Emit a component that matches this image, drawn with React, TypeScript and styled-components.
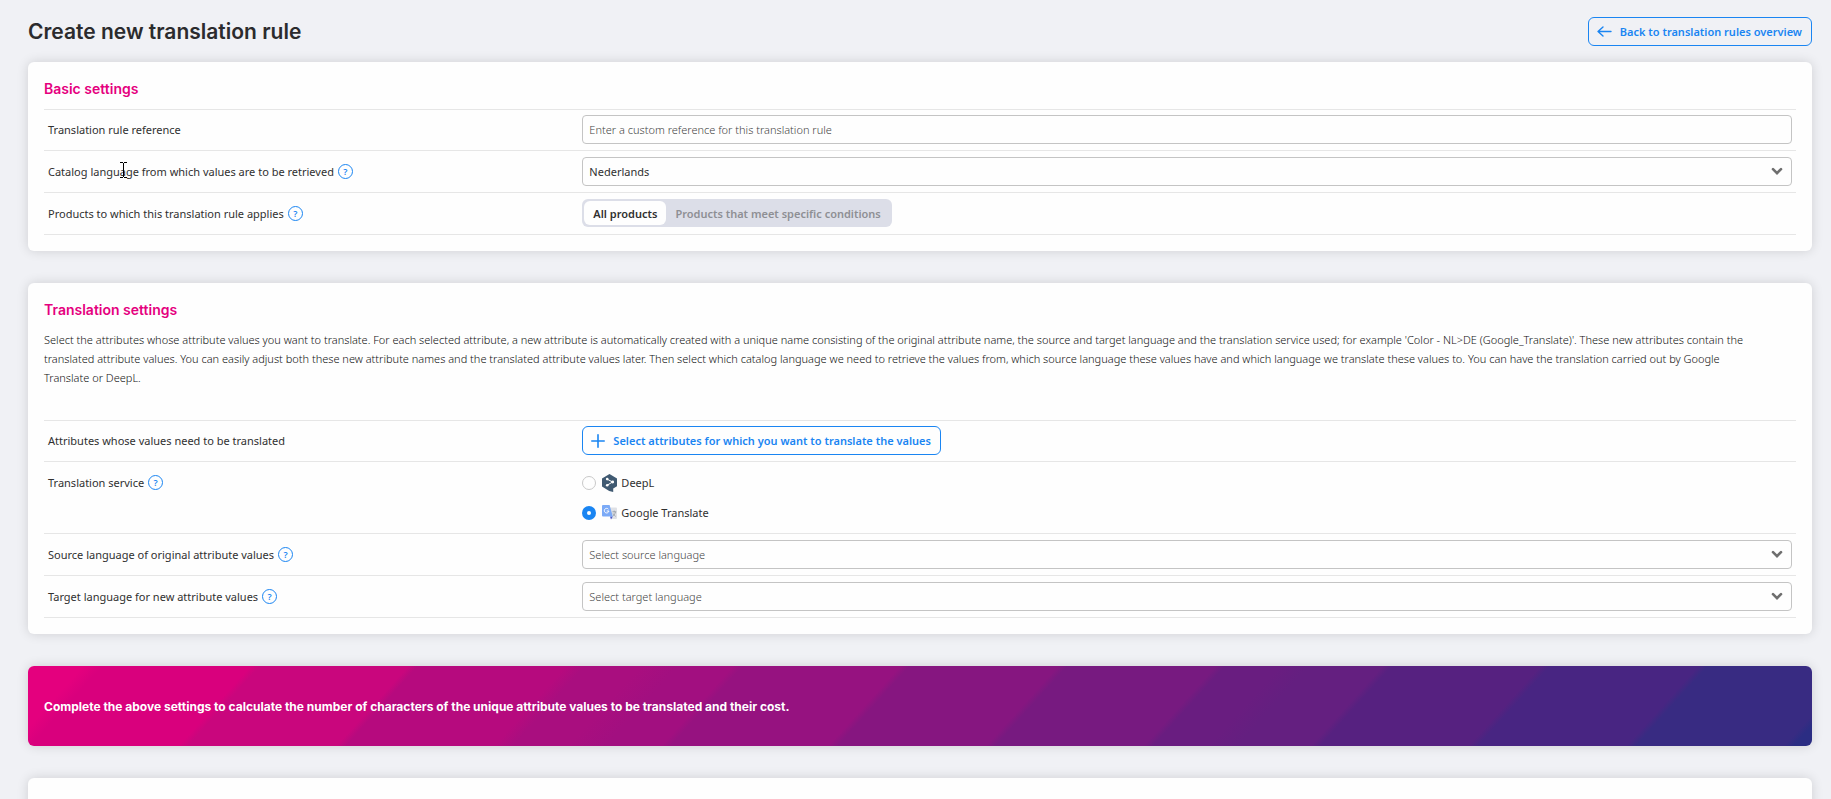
import React, { useState } from 'react';
import styled, { createGlobalStyle } from 'styled-components';

const blue = '#1a85f2';
const pink = '#e5007e';

const GlobalStyle = createGlobalStyle`
  *, *::before, *::after { box-sizing: border-box; }
  body {
    margin: 0;
    background: #f0f1f5;
    color: #303030;
    font-family: "Noto Sans", "Open Sans", sans-serif;
    font-size: 11px;
  }
  button, input, select { font: inherit; color: inherit; margin: 0; }
`;

const Page = styled.main`
  display: flex;
  flex-direction: column;
  gap: 32px;
  height: 100vh;
  overflow: hidden;
  padding: 17px 19px 0 28px;
`;

const Header = styled.header`
  display: flex;
  align-items: center;
  justify-content: space-between;
  flex: none;
  margin-bottom: -16px;
`;

const Title = styled.h1`
  margin: 0;
  font-family: Inter, sans-serif;
  font-size: 21px;
  font-weight: 600;
  line-height: 29px;
  color: #2b2b2d;
`;

const OutlineButton = styled.button`
  display: inline-flex;
  align-items: center;
  gap: 8px;
  height: 29px;
  padding: 0 9px 0 8px;
  border: 1px solid ${blue};
  border-radius: 6px;
  background: transparent;
  color: ${blue};
  font-weight: 600;
  text-decoration: none;
  white-space: nowrap;
  cursor: pointer;
`;

const Card = styled.section<{ $open?: boolean }>`
  flex: none;
  min-height: ${(p) => (p.$open ? '120px' : '0')};
  padding: 16px;
  border-radius: 6px;
  background: #fefefe;
  box-shadow: 0 0 12px rgba(0, 0, 0, 0.14);
`;

const CardTitle = styled.h2`
  margin: 0 0 9px;
  font-family: Inter, sans-serif;
  font-size: 14px;
  font-weight: 600;
  line-height: 22px;
  color: ${pink};
`;

const Intro = styled.p`
  margin: 0 0 33px;
  padding-right: 40px;
  font-weight: 300;
  line-height: 19px;
  color: #111;
`;

const Rows = styled.div`
  border-top: 1px solid #e6e6e6;
`;

const Row = styled.div`
  display: grid;
  grid-template-columns: 30.5% 1fr;
  padding: 6px 0;
  border-bottom: 1px solid #e6e6e6;
  &:first-child { padding-top: 5px; }
`;

const LabelCell = styled.div`
  position: relative;
  display: flex;
  align-items: center;
  gap: 4px;
  height: 29px;
  padding: 0 4px;
`;

const ControlCell = styled.div`
  padding: 0 4px;
`;

const HelpButton = styled.button`
  display: flex;
  align-items: center;
  justify-content: center;
  width: 15px;
  height: 15px;
  padding: 0;
  border: 1px solid ${blue};
  border-radius: 50%;
  background: none;
  color: ${blue};
  font-size: 9px;
  font-weight: 600;
  line-height: 13px;
`;

const TextInput = styled.input`
  display: block;
  width: 100%;
  height: 29px;
  padding: 0 6px;
  border: 1px solid #c4c4c4;
  border-radius: 4px;
  background: #fefefe;
  outline: none;
  &::placeholder { color: #444; font-weight: 300; opacity: 1; }
`;

const SelectWrap = styled.div`
  position: relative;
`;

const SelectBox = styled.select<{ $placeholder?: boolean }>`
  display: block;
  width: 100%;
  height: 29px;
  padding: 0 6px;
  border: 1px solid #c4c4c4;
  border-radius: 4px;
  background: #fefefe;
  appearance: none;
  font-weight: ${(p) => (p.$placeholder ? 300 : 400)};
  color: ${(p) => (p.$placeholder ? '#444' : '#303030')};
`;

const Chevron = styled.svg`
  position: absolute;
  top: 10px;
  right: 9px;
  pointer-events: none;
`;

const Toggle = styled.div`
  display: inline-flex;
  height: 28px;
  padding: 2px;
  border-radius: 6px;
  background: #dcdee8;
`;

const ToggleOption = styled.button<{ $active: boolean }>`
  padding: 0 9px;
  border: 0;
  border-radius: 6px;
  background: ${(p) => (p.$active ? '#fefefe' : 'transparent')};
  color: ${(p) => (p.$active ? '#303030' : '#8e8f94')};
  font-weight: 600;
`;

const RadioGroup = styled(ControlCell)`
  display: flex;
  flex-direction: column;
  align-items: flex-start;
  gap: 1px;
`;

const RadioLabel = styled.label`
  display: flex;
  align-items: center;
  height: 29px;
  gap: 4px;
`;

const Radio = styled.input`
  appearance: none;
  width: 14px;
  height: 14px;
  margin-right: 2px;
  border: 1px solid #c9c9c9;
  border-radius: 50%;
  background: #fefefe;
  &:checked { border: 5px solid ${blue}; }
`;

const Logo = styled.svg`
  flex: none;
`;

const Banner = styled.section`
  display: flex;
  align-items: center;
  flex: none;
  min-height: 80px;
  padding: 0 16px;
  border-radius: 6px;
  color: #fff;
  font-family: Inter, sans-serif;
  font-size: 12px;
  font-weight: 700;
  box-shadow: 0 0 12px rgba(0, 0, 0, 0.14);
  background: linear-gradient(
    132deg,
    #e4007e 3%, #d9007d 4%, #d9007d 12%, #c9067d 12.5%,
    #c9067d 20.5%, #b60a7e 21%, #b60a7e 29%, #a90e7f 30%,
    #a90e7f 33%, #a20f80 35%, #a20f80 38%, #961280 38.5%,
    #961280 47%, #861680 47.5%, #861680 55.5%, #771a80 56%,
    #771a80 64%, #691d80 64.5%, #691d80 67.5%, #641f80 69%,
    #641f80 73%, #562180 73.5%, #562180 81.5%, #482582 82%,
    #482582 90%, #382b82 90.5%, #382b82 98.5%, #2b2d83 99%
  );
`;

const TextCursor = styled.svg`
  position: absolute;
  top: 5px;
  left: 76px;
  pointer-events: none;
`;

function Help({ topic }: { topic: string }) {
  return <HelpButton type="button" aria-label={`Help: ${topic}`}>?</HelpButton>;
}

type DropDownProps = { id: string; options: string[]; placeholder?: string };

function DropDown({ id, options, placeholder }: DropDownProps) {
  const [value, setValue] = useState(placeholder ? '' : options[0]);
  return (
    <SelectWrap>
      <SelectBox id={id} value={value} $placeholder={value === ''} onChange={(e) => setValue(e.target.value)}>
        {placeholder && <option value="">{placeholder}</option>}
        {options.map((o) => <option key={o}>{o}</option>)}
      </SelectBox>
      <Chevron width="12" height="9" viewBox="0 0 12 9" aria-hidden="true">
        <path d="M2 2.2 6 6.2 10 2.2" fill="none" stroke="#6e6e6e" strokeWidth="2.6" strokeLinecap="round" />
      </Chevron>
    </SelectWrap>
  );
}

function DeeplLogo() {
  return (
    <Logo width="15" height="18" viewBox="0 0 15 18" aria-hidden="true">
      <path d="M0 4.4 7.5 0 15 4.4v7.9L11.2 14.6V18L7.2 16.9 0 12.6z" fill="#405a72" />
      <path d="M5.2 5.2 10.6 8 5.2 11.2" fill="none" stroke="#fff" strokeWidth="1" />
      <circle cx="5.2" cy="5.1" r="1.3" fill="#fff" />
      <circle cx="10.7" cy="8" r="1.4" fill="#fff" />
      <circle cx="5.2" cy="11.2" r="1.3" fill="#fff" />
    </Logo>
  );
}

function GoogleTranslateLogo() {
  return (
    <Logo width="15" height="15" viewBox="0 0 15 15" aria-hidden="true">
      <path d="M6 2.5h8a1 1 0 0 1 1 1V13a1 1 0 0 1-1 1H9z" fill="#dfe1e6" />
      <path d="M10.4 6.8h3.8M12.2 5.6v1.2M13.5 6.8c-.4 2-1.6 3.6-2.7 4.4M11 8.4c.6 1.2 1.6 2.3 2.7 3" fill="none" stroke="#8a8f98" strokeWidth=".7" />
      <path d="M8 11.5h2.8L9 14.6z" fill="#4a55c8" />
      <path d="M1 0h6.6l3.2 11.5H1a1 1 0 0 1-1-1V1a1 1 0 0 1 1-1z" fill="#7baaf7" />
      <path d="M6.4 4.2A2.3 2.3 0 1 0 6.9 6H4.7" fill="none" stroke="#fff" strokeWidth="1" />
    </Logo>
  );
}

export default function App() {
  const [scope, setScope] = useState<'all' | 'some'>('all');
  const [service, setService] = useState<'deepl' | 'google'>('google');

  return (
    <>
      <GlobalStyle />
      <Page>
        <Header>
          <Title>Create new translation rule</Title>
          <OutlineButton as="a" href="#overview">
            <svg width="15" height="12" viewBox="0 0 15 12" fill="none" stroke={blue} strokeWidth="1.4" strokeLinecap="round" strokeLinejoin="round" aria-hidden="true">
              <path d="M6 1 1 5.5 6 10M1 5.5h13" />
            </svg>
            Back to translation rules overview
          </OutlineButton>
        </Header>

        <Card>
          <CardTitle>Basic settings</CardTitle>
          <Rows>
            <Row>
              <LabelCell><label htmlFor="reference">Translation rule reference</label></LabelCell>
              <ControlCell>
                <TextInput id="reference" type="text" placeholder="Enter a custom reference for this translation rule" />
              </ControlCell>
            </Row>
            <Row>
              <LabelCell>
                <label htmlFor="catalog">Catalog language from which values are to be retrieved</label>
                <Help topic="catalog language" />
                <TextCursor width="7" height="16" viewBox="0 0 7 16" aria-hidden="true">
                  <path d="M0 .5h3M4 .5h3M3.5 1v14M0 15.5h3M4 15.5h3" stroke="#000" />
                </TextCursor>
              </LabelCell>
              <ControlCell><DropDown id="catalog" options={['Nederlands']} /></ControlCell>
            </Row>
            <Row>
              <LabelCell>
                <span id="scope">Products to which this translation rule applies</span>
                <Help topic="products" />
              </LabelCell>
              <ControlCell>
                <Toggle role="group" aria-labelledby="scope">
                  <ToggleOption type="button" $active={scope === 'all'} aria-pressed={scope === 'all'} onClick={() => setScope('all')}>
                    All products
                  </ToggleOption>
                  <ToggleOption type="button" $active={scope === 'some'} aria-pressed={scope === 'some'} onClick={() => setScope('some')}>
                    Products that meet specific conditions
                  </ToggleOption>
                </Toggle>
              </ControlCell>
            </Row>
          </Rows>
        </Card>

        <Card>
          <CardTitle>Translation settings</CardTitle>
          <Intro>
            Select the attributes whose attribute values you want to translate. For each selected attribute, a new
            attribute is automatically created with a unique name consisting of the original attribute name, the source
            and target language and the translation service used; for example 'Color - NL&gt;DE (Google_Translate)'.
            These new attributes contain the translated attribute values. You can easily adjust both these new attribute
            names and the translated attribute values later. Then select which catalog language we need to retrieve the
            values from, which source language these values have and which language we translate these values to. You
            can have the translation carried out by Google Translate or DeepL.
          </Intro>
          <Rows>
            <Row>
              <LabelCell>Attributes whose values need to be translated</LabelCell>
              <ControlCell>
                <OutlineButton type="button">
                  <svg width="14" height="14" viewBox="0 0 14 14" stroke={blue} strokeWidth="1.6" strokeLinecap="round" aria-hidden="true">
                    <path d="M7 .8v12.4M.8 7h12.4" />
                  </svg>
                  Select attributes for which you want to translate the values
                </OutlineButton>
              </ControlCell>
            </Row>
            <Row>
              <LabelCell>
                <span id="service">Translation service</span>
                <Help topic="translation service" />
              </LabelCell>
              <RadioGroup role="radiogroup" aria-labelledby="service">
                <RadioLabel>
                  <Radio type="radio" name="service" checked={service === 'deepl'} onChange={() => setService('deepl')} />
                  <DeeplLogo />
                  DeepL
                </RadioLabel>
                <RadioLabel>
                  <Radio type="radio" name="service" checked={service === 'google'} onChange={() => setService('google')} />
                  <GoogleTranslateLogo />
                  Google Translate
                </RadioLabel>
              </RadioGroup>
            </Row>
            <Row>
              <LabelCell>
                <label htmlFor="source">Source language of original attribute values</label>
                <Help topic="source language" />
              </LabelCell>
              <ControlCell><DropDown id="source" placeholder="Select source language" options={['Nederlands']} /></ControlCell>
            </Row>
            <Row>
              <LabelCell>
                <label htmlFor="target">Target language for new attribute values</label>
                <Help topic="target language" />
              </LabelCell>
              <ControlCell><DropDown id="target" placeholder="Select target language" options={['Deutsch']} /></ControlCell>
            </Row>
          </Rows>
        </Card>

        <Banner>
          Complete the above settings to calculate the number of characters of the unique attribute values to be
          translated and their cost.
        </Banner>

        <Card $open />
      </Page>
    </>
  );
}
